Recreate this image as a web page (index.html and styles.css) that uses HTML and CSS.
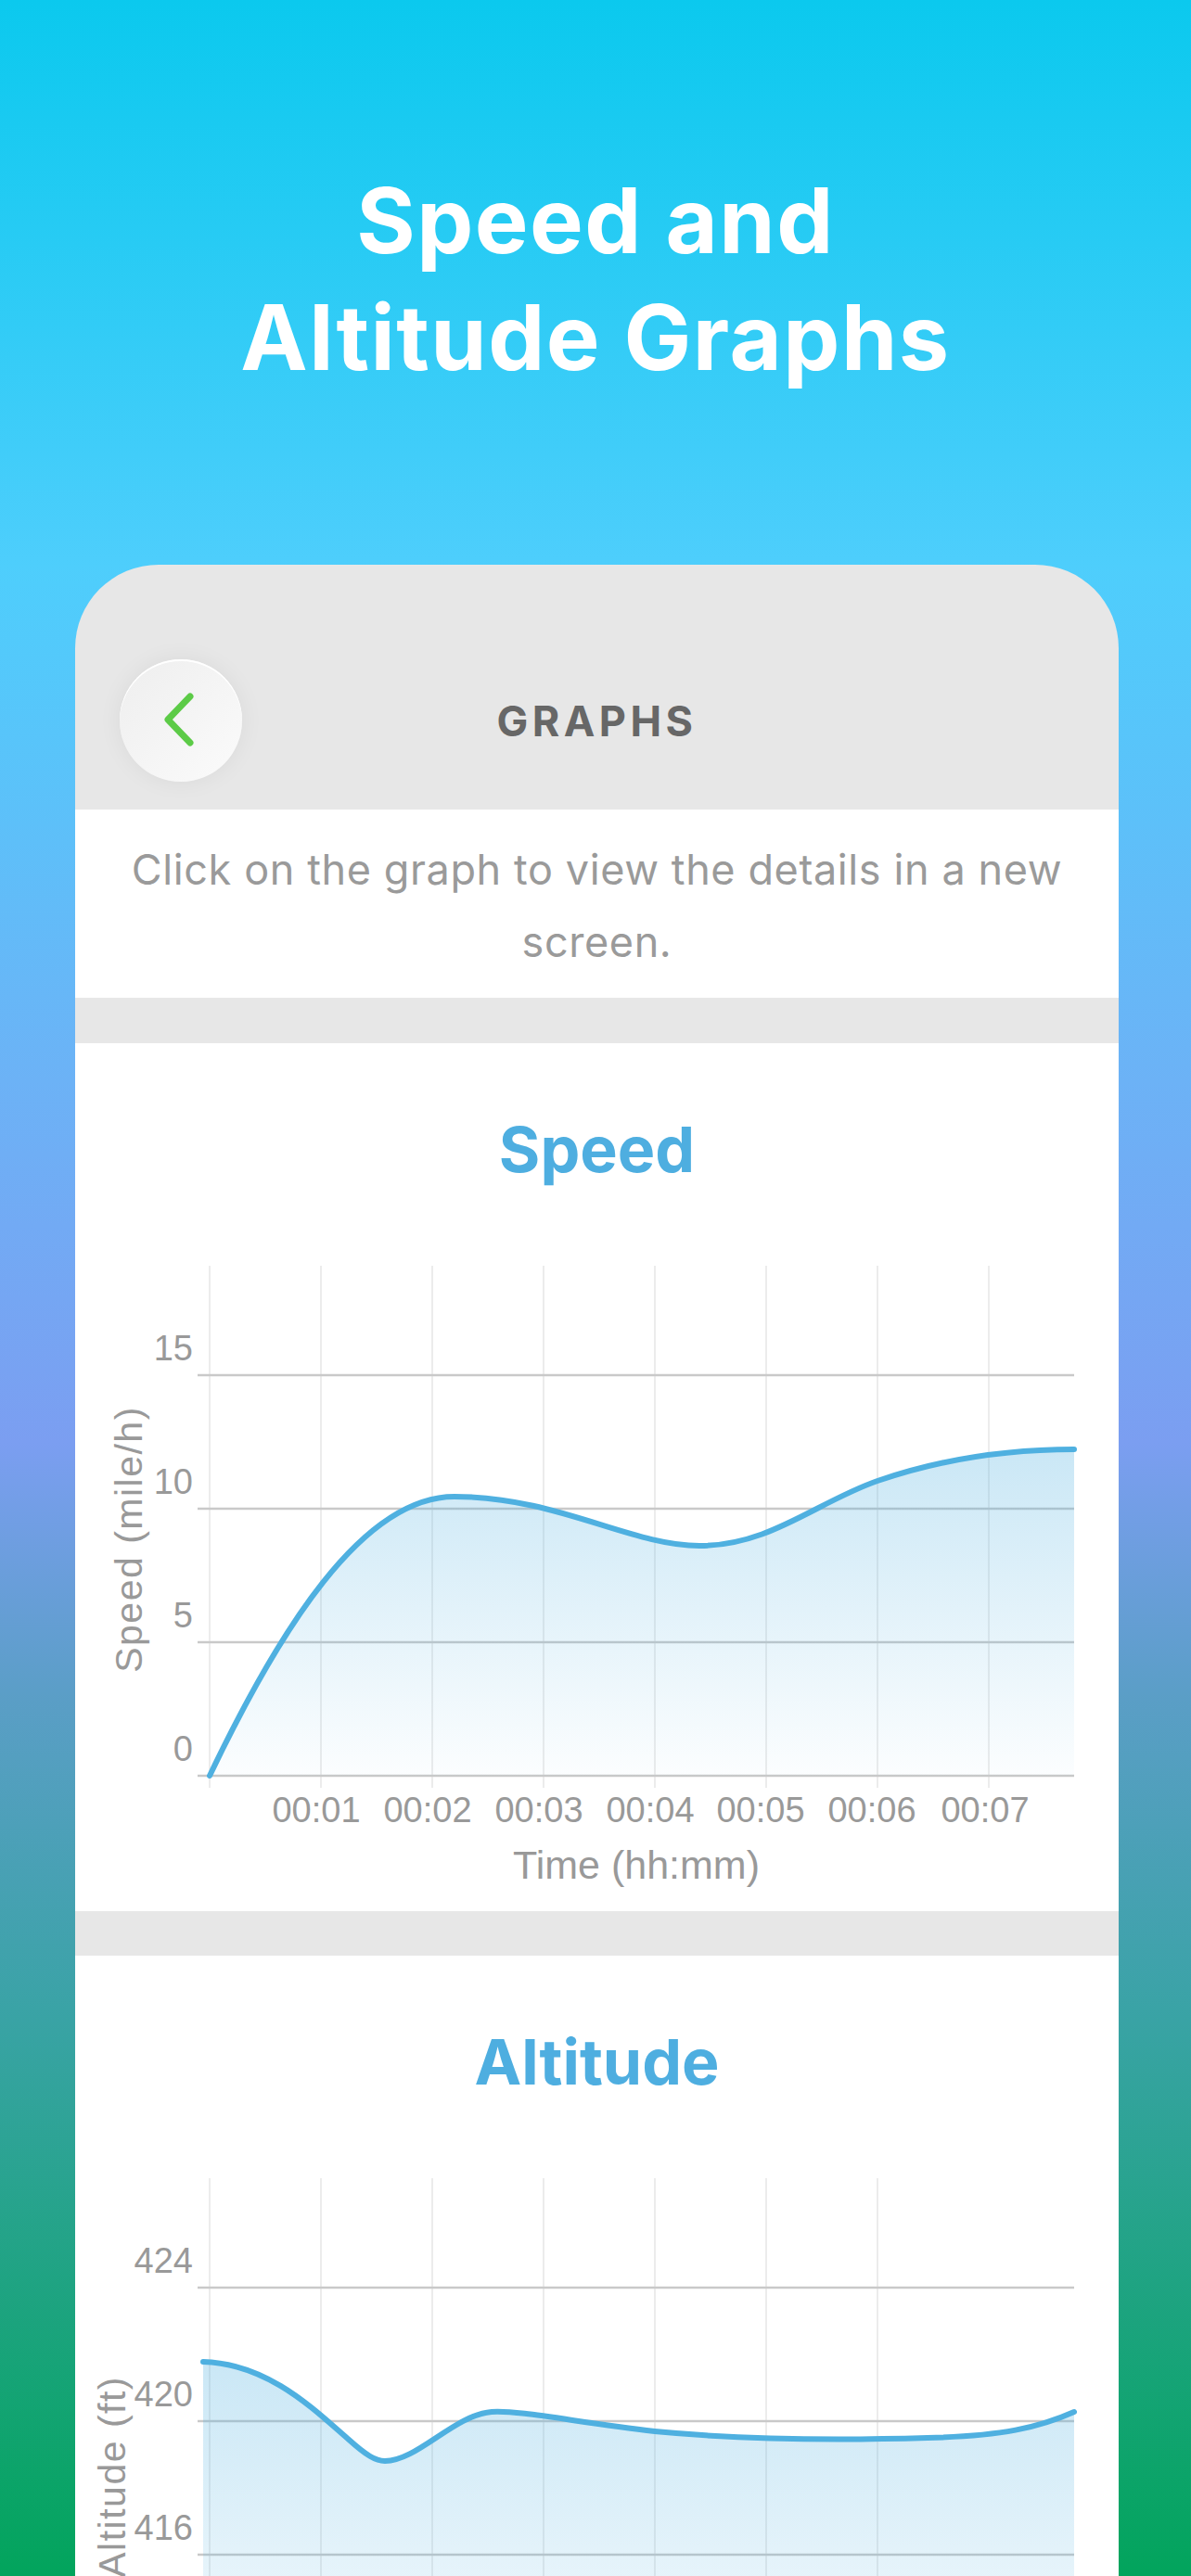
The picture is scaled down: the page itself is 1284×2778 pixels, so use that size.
FILE: index.html
```html
<!DOCTYPE html>
<html lang="en">
<head>
  <meta charset="UTF-8">
  <meta name="viewport" content="width=device-width, initial-scale=1.0">
  <title>Speed and Altitude Graphs</title>
  <link rel="stylesheet" href="styles.css">
</head>
<body>

<header class="hero">
  <h1 class="hero-title">Speed and<br>Altitude Graphs</h1>
</header>

<main class="phone">
  <div class="topbar">
    <button class="back-btn" aria-label="Back">
      <svg width="40" height="64" viewBox="0 0 40 64">
        <polyline points="32,6 8,31 32,56" fill="none" stroke="#5ccb47" stroke-width="7" stroke-linecap="round" stroke-linejoin="round"/>
      </svg>
    </button>
    <div class="topbar-title">GRAPHS</div>
  </div>

  <p class="hint">Click on the graph to view the details in a new screen.</p>

  <section class="graph">
    <h2 class="graph-title">Speed</h2>
    <svg class="chart chart-speed" viewBox="81 1279 1125 782">
      <defs>
        <linearGradient id="speedFill" gradientUnits="userSpaceOnUse" x1="0" y1="1563" x2="0" y2="1915">
          <stop offset="0" stop-color="#4fb0e0" stop-opacity="0.3"/>
          <stop offset="1" stop-color="#4fb0e0" stop-opacity="0.02"/>
        </linearGradient>
      </defs>
      <g class="grid-v">
        <line x1="226" y1="1365" x2="226" y2="1928"/>
        <line x1="346" y1="1365" x2="346" y2="1928"/>
        <line x1="466" y1="1365" x2="466" y2="1928"/>
        <line x1="586" y1="1365" x2="586" y2="1928"/>
        <line x1="706" y1="1365" x2="706" y2="1928"/>
        <line x1="826" y1="1365" x2="826" y2="1928"/>
        <line x1="946" y1="1365" x2="946" y2="1928"/>
        <line x1="1066" y1="1365" x2="1066" y2="1928"/>
      </g>
      <g class="grid-h">
        <line x1="213" y1="1483" x2="1158" y2="1483"/>
        <line x1="213" y1="1627" x2="1158" y2="1627"/>
        <line x1="213" y1="1771" x2="1158" y2="1771"/>
        <line x1="213" y1="1915" x2="1158" y2="1915"/>
      </g>
      <path class="area" fill="url(#speedFill)" d="M226,1915 C300,1760 390,1614 490,1614 C600,1614 680,1667 754,1667 C830,1667 880,1620 946,1597 C1010,1575 1080,1563 1158,1563 L1158,1915 Z"/>
      <path class="line" d="M226,1915 C300,1760 390,1614 490,1614 C600,1614 680,1667 754,1667 C830,1667 880,1620 946,1597 C1010,1575 1080,1563 1158,1563"/>
      <g class="tick-y">
        <text x="208" y="1467">15</text>
        <text x="208" y="1611">10</text>
        <text x="208" y="1755">5</text>
        <text x="208" y="1899">0</text>
      </g>
      <g class="tick-x">
        <text x="341" y="1965">00:01</text>
        <text x="461" y="1965">00:02</text>
        <text x="581" y="1965">00:03</text>
        <text x="701" y="1965">00:04</text>
        <text x="820" y="1965">00:05</text>
        <text x="940" y="1965">00:06</text>
        <text x="1062" y="1965">00:07</text>
      </g>
      <text class="axis-x" x="686" y="2026">Time (hh:mm)</text>
      <text class="axis-y" transform="translate(153 1660) rotate(-90)">Speed (mile/h)</text>
    </svg>
  </section>

  <section class="graph">
    <h2 class="graph-title">Altitude</h2>
    <svg class="chart chart-altitude" viewBox="81 2263 1125 640">
      <defs>
        <linearGradient id="altFill" gradientUnits="userSpaceOnUse" x1="0" y1="2547" x2="0" y2="2900">
          <stop offset="0" stop-color="#4fb0e0" stop-opacity="0.3"/>
          <stop offset="1" stop-color="#4fb0e0" stop-opacity="0.06"/>
        </linearGradient>
      </defs>
      <g class="grid-v">
        <line x1="226" y1="2349" x2="226" y2="2900"/>
        <line x1="346" y1="2349" x2="346" y2="2900"/>
        <line x1="466" y1="2349" x2="466" y2="2900"/>
        <line x1="586" y1="2349" x2="586" y2="2900"/>
        <line x1="706" y1="2349" x2="706" y2="2900"/>
        <line x1="826" y1="2349" x2="826" y2="2900"/>
        <line x1="946" y1="2349" x2="946" y2="2900"/>
      </g>
      <g class="grid-h">
        <line x1="213" y1="2467" x2="1158" y2="2467"/>
        <line x1="213" y1="2611" x2="1158" y2="2611"/>
        <line x1="213" y1="2755" x2="1158" y2="2755"/>
      </g>
      <path class="area" fill="url(#altFill)" d="M219,2547 C290,2549 340,2600 375,2630 C395,2648 405,2654 415,2654 C450,2654 490,2604 530,2601 C560,2599 620,2612 706,2622 C800,2631 900,2632 1000,2629 C1080,2627 1120,2618 1158,2601 L1158,2900 L219,2900 Z"/>
      <path class="line" d="M219,2547 C290,2549 340,2600 375,2630 C395,2648 405,2654 415,2654 C450,2654 490,2604 530,2601 C560,2599 620,2612 706,2622 C800,2631 900,2632 1000,2629 C1080,2627 1120,2618 1158,2601"/>
      <g class="tick-y">
        <text x="208" y="2451">424</text>
        <text x="208" y="2595">420</text>
        <text x="208" y="2739">416</text>
      </g>
      <text class="axis-y axis-y-end" transform="translate(135 2562) rotate(-90)">Altitude (ft)</text>
    </svg>
  </section>
</main>

</body>
</html>
```

FILE: styles.css
```css
html, body {
  margin: 0;
  height: 2778px;
  overflow: hidden;
}

body {
  font-family: 'Inter', 'Noto Sans', sans-serif;
  background: linear-gradient(180deg, #0bc9ee 0%, #4ecefc 22%, #6cb2f6 42%, #7b9ef1 56%, #5a9ec6 66%, #3aa3a6 78%, #02a45c 100%);
}

.hero {
  padding-top: 175px;
  height: 609px;
  box-sizing: border-box;
}

.hero-title {
  margin: 0;
  color: #fff;
  font-size: 97px;
  line-height: 126px;
  font-weight: 700;
  text-align: center;
  letter-spacing: 1.5px;
}

.phone {
  margin-left: 81px;
  width: 1125px;
  height: 2169px;
  background-color: #e7e7e7;
  border-radius: 90px 90px 0 0;
  overflow: hidden;
}

.topbar {
  display: grid;
  grid-template-columns: 1fr auto 1fr;
  align-items: center;
  padding: 102px 48px 30px;
}

.back-btn {
  justify-self: start;
  width: 132px;
  height: 132px;
  border-radius: 50%;
  border: none;
  padding: 0;
  display: flex;
  align-items: center;
  justify-content: center;
  background: linear-gradient(135deg, #eeeeee 0%, #fbfbfb 100%);
  box-shadow: inset 0 2px 0 #fff, 0 0 26px rgba(0, 0, 0, 0.06);
  cursor: pointer;
}

.back-btn svg {
  margin-left: -4px;
}

.topbar-title {
  font-size: 45px;
  font-weight: 700;
  color: #676767;
  letter-spacing: 4.5px;
}

.hint {
  margin: 0;
  background-color: #fff;
  padding: 26px 40px 21px;
  font-size: 45px;
  line-height: 78px;
  color: #9a9a9a;
  text-align: center;
  letter-spacing: 0.6px;
}

.graph {
  background-color: #fff;
  margin-top: 49px;
  padding-top: 74px;
}

.graph + .graph {
  margin-top: 48px;
}

.graph-title {
  margin: 0;
  font-size: 68px;
  line-height: 80px;
  font-weight: 700;
  color: #4eaee0;
  text-align: center;
}

.chart {
  display: block;
  width: 1125px;
}

.chart-speed {
  height: 782px;
}

.chart-altitude {
  height: 640px;
}

.grid-v line {
  stroke: #ececec;
  stroke-width: 2;
}

.grid-h line {
  stroke: #c9c9c9;
  stroke-width: 2.5;
}

.line {
  fill: none;
  stroke: #4fb0e0;
  stroke-width: 6;
  stroke-linecap: round;
}

.chart text {
  font-family: 'Liberation Sans', Arial, sans-serif;
  fill: #999;
  font-size: 38px;
}

.tick-y text {
  text-anchor: end;
}

.tick-x text,
.axis-x {
  text-anchor: middle;
}

.chart .axis-x {
  font-size: 43px;
}

.chart .axis-y {
  font-size: 41px;
  letter-spacing: 1.5px;
  text-anchor: middle;
}

.chart .axis-y-end {
  text-anchor: end;
}
```
